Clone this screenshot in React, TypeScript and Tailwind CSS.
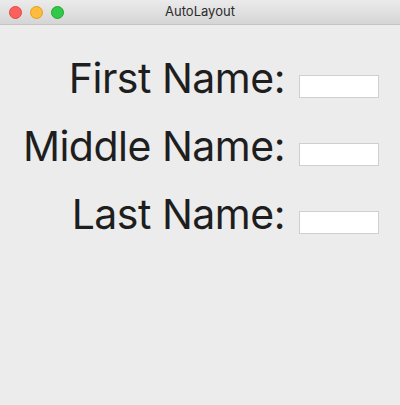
const rows = ["First Name:", "Middle Name:", "Last Name:"];

export default function App() {
  return (
    <div className="flex h-[405px] w-[400px] flex-col bg-[#ececec] font-['Inter','Helvetica',sans-serif]">
      <div className="relative flex h-[25px] items-center justify-center border-b border-[#c4c4c4] bg-gradient-to-b from-[#ebebeb] to-[#d5d5d5]">
        <div className="absolute left-[9px] top-[6px] flex gap-[8px]">
          <span className="h-[13px] w-[13px] rounded-full border border-[#e2463f] bg-[#fc605c]" />
          <span className="h-[13px] w-[13px] rounded-full border border-[#e1a116] bg-[#fdbc40]" />
          <span className="h-[13px] w-[13px] rounded-full border border-[#1aab29] bg-[#34c84a]" />
        </div>
        <span className="text-[13px] text-[#2b2b2b]">AutoLayout</span>
      </div>
      <div className="grid grid-cols-[1fr_80px] items-start gap-x-[14px] gap-y-[16px] pr-[21px] pt-[27px]">
        {rows.map((label) => (
          <div key={label} className="contents">
            <div className="text-right text-[41px] leading-[52px] tracking-[-0.5px] text-[#1e1e1e]">
              {label}
            </div>
            <input className="mt-[23px] h-[23px] w-[80px] border border-[#cfcfcf] bg-white outline-none" />
          </div>
        ))}
      </div>
    </div>
  );
}
